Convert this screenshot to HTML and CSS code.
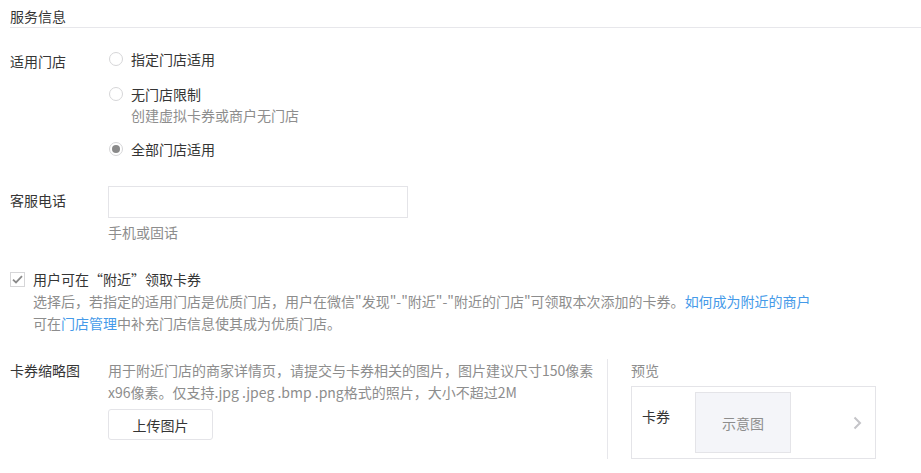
FILE: index.html
```html
<!DOCTYPE html>
<html lang="zh-CN">
<head>
<meta charset="utf-8">
<title>服务信息</title>
<link rel="stylesheet" href="styles.css">
</head>
<body>
<div class="page">
  <h2 class="section-title">服务信息</h2>

  <div class="form-row row-store">
    <label class="row-label label-store">适用门店</label>
    <div class="row-body">
      <div class="option opt-1"><span class="radio"></span><span>指定门店适用</span></div>
      <div class="option opt-2"><span class="radio"></span><span>无门店限制</span></div>
      <div class="option-hint">创建虚拟卡券或商户无门店</div>
      <div class="option opt-3"><span class="radio checked"></span><span>全部门店适用</span></div>
    </div>
  </div>

  <div class="form-row row-phone">
    <label class="row-label label-phone">客服电话</label>
    <div class="row-body">
      <div class="text-input"></div>
      <div class="input-hint">手机或固话</div>
    </div>
  </div>

  <div class="check-row">
    <span class="checkbox">
      <svg width="11" height="9" viewBox="0 0 11 9"><path d="M1 4.6 L4 7.4 L10 1.2" fill="none" stroke="#8a8a8a" stroke-width="1.8"/></svg>
    </span>
    <div class="check-body">
      <div class="check-title">用户可在“附近”领取卡券</div>
      <div class="check-desc">选择后，若指定的适用门店是优质门店，用户在微信"发现"-"附近"-"附近的门店"可领取本次添加的卡券。<a class="link">如何成为附近的商户</a><br>可在<a class="link">门店管理</a>中补充门店信息使其成为优质门店。</div>
    </div>
  </div>

  <div class="form-row row-thumb">
    <label class="row-label">卡券缩略图</label>
    <div class="thumb-body">
      <div class="thumb-desc">用于附近门店的商家详情页，请提交与卡券相关的图片，图片建议尺寸150像素<br>x96像素。仅支持.jpg .jpeg .bmp .png格式的照片，大小不超过2M</div>
      <div class="btn">上传图片</div>
    </div>
    <div class="preview">
      <div class="preview-title">预览</div>
      <div class="preview-box">
        <div class="preview-label">卡券</div>
        <div class="preview-img">示意图</div>
        <svg class="chevron" width="9" height="14" viewBox="0 0 9 14"><path d="M1.5 1.5 L7 7 L1.5 12.5" fill="none" stroke="#c4c4c8" stroke-width="2"/></svg>
      </div>
    </div>
  </div>
</div>
</body>
</html>
```

FILE: styles.css
```css
* { box-sizing: border-box; }
html, body { margin: 0; padding: 0; background: #ffffff; }
body {
  font-family: "Noto Sans CJK SC", "Liberation Sans", sans-serif;
  font-size: 14px;
  color: #353535;
}
.page { padding-left: 10px; }

.section-title {
  margin: 0;
  padding-top: 5px;
  font-size: 14px;
  font-weight: normal;
  line-height: 22px;
  border-bottom: 1px solid #e7e7eb;
}

.form-row { display: flex; align-items: flex-start; }
.row-label { width: 98px; flex: none; line-height: 22px; }
.row-store { margin-top: 20px; }
.label-store { padding-top: 2px; }

.option { display: flex; align-items: center; line-height: 22px; }
.opt-2 { margin-top: 13px; }
.opt-3 { margin-top: 13px; }
.option-hint { line-height: 20px; color: #8d8d8d; padding-left: 23px; }

.radio {
  width: 14px; height: 14px;
  margin-left: 1px; margin-right: 8px;
  border: 1px solid #d6d6d8;
  border-radius: 50%;
  display: flex; align-items: center; justify-content: center;
}
.radio.checked::after {
  content: "";
  width: 8px; height: 8px;
  border-radius: 50%;
  background: #8a8a8a;
}

.row-phone { margin-top: 26px; }
.label-phone { padding-top: 3px; }
.text-input {
  width: 300px; height: 32px;
  border: 1px solid #e4e4e8;
  background: #fff;
}
.input-hint { margin-top: 3px; line-height: 22px; color: #8d8d8d; }

.check-row { display: flex; align-items: flex-start; margin-top: 25px; }
.checkbox {
  flex: none;
  width: 15px; height: 15px;
  margin-top: 4px; margin-right: 8px;
  border: 1px solid #d6d6d8;
  display: flex; align-items: center; justify-content: center;
}
.check-title { line-height: 22px; }
.check-desc { line-height: 22px; color: #8d8d8d; }
.link { color: #459ae9; text-decoration: none; }

.row-thumb { margin-top: 25px; }
.thumb-body { width: 492px; flex: none; }
.thumb-desc { line-height: 22px; color: #8d8d8d; }
.btn {
  margin-top: 6px;
  width: 105px; height: 31px;
  border: 1px solid #e4e4e8;
  border-radius: 3px;
  display: flex; align-items: center; justify-content: center;
  color: #353535;
}

.preview {
  margin-left: 7px;
  padding-left: 23px;
  border-left: 1px solid #e7e7eb;
  height: 100px;
}
.preview-title { line-height: 22px; color: #8d8d8d; }
.preview-box {
  margin-top: 5px;
  width: 245px; height: 73px;
  border: 1px solid #e4e4e8;
  padding: 5px 13px 5px 10px;
  display: flex; align-items: flex-start;
}
.preview-label { width: 53px; flex: none; padding-top: 13px; line-height: 22px; }
.preview-img {
  width: 96px; height: 61px;
  background: #f4f5f9;
  border: 1px solid #e4e4e8;
  color: #8d8d8d;
  display: flex; align-items: center; justify-content: center;
}
.chevron { margin-left: auto; align-self: center; }
```
